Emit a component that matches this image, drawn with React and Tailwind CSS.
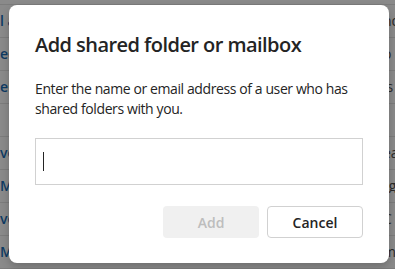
export default function App() {
  const rows = [
    ["l a", "nd"],
    ["ed", "o"],
    ["el", "is"],
    ["", ""],
    ["ve", "ea"],
    ["M", "rg"],
    ["ve", "C"],
    ["M", "m"],
  ];
  return (
    <div
      className="relative w-[395px] h-[269px] overflow-hidden bg-[#8a8a8a]"
      style={{ fontFamily: '"Segoe UI", "Open Sans", "Noto Sans", sans-serif' }}
    >
      <div className="pt-[4px] border-b border-[#7c7c7c]" />
      <div className="flex flex-col">
        {rows.map(([l, r], i) => (
          <div
            key={i}
            className="h-[33px] flex items-center justify-between border-b border-[#7c7c7c] text-[14px] font-semibold text-[#0e3a63]"
          >
            <span className="leading-none">{l}</span>
            <span className="w-[12px] overflow-hidden whitespace-nowrap leading-none font-normal text-[#2a2a2a]">
              {r}
            </span>
          </div>
        ))}
      </div>

      <div className="absolute left-[9px] top-[5px] w-[380px] h-[258px] bg-white rounded-[8px] shadow-[0_4px_8px_rgba(0,0,0,0.2)] px-[26px] pt-[26px] flex flex-col">
        <h2 className="text-[20px] leading-[28px] font-semibold text-[#242424] tracking-[-0.55px]">
          Add shared folder or mailbox
        </h2>
        <p className="mt-[20px] text-[14px] leading-[20px] text-[#242424] tracking-[-0.4px]">
          Enter the name or email address of a user who has shared folders with you.
        </p>
        <div className="mt-[19px] h-[47px] border border-[#d1d1d1] flex items-center pl-[7px]">
          <div className="w-[1px] h-[19px] bg-[#242424]" />
        </div>
        <div className="mt-[21px] flex justify-end gap-[8px]">
          <button className="w-[96px] h-[32px] rounded-[4px] bg-[#f0f0f0] text-[14px] font-semibold text-[#bdbdbd]">
            Add
          </button>
          <button className="w-[96px] h-[32px] rounded-[4px] bg-white border border-[#d1d1d1] text-[14px] font-semibold text-[#242424]">
            Cancel
          </button>
        </div>
      </div>
    </div>
  );
}
